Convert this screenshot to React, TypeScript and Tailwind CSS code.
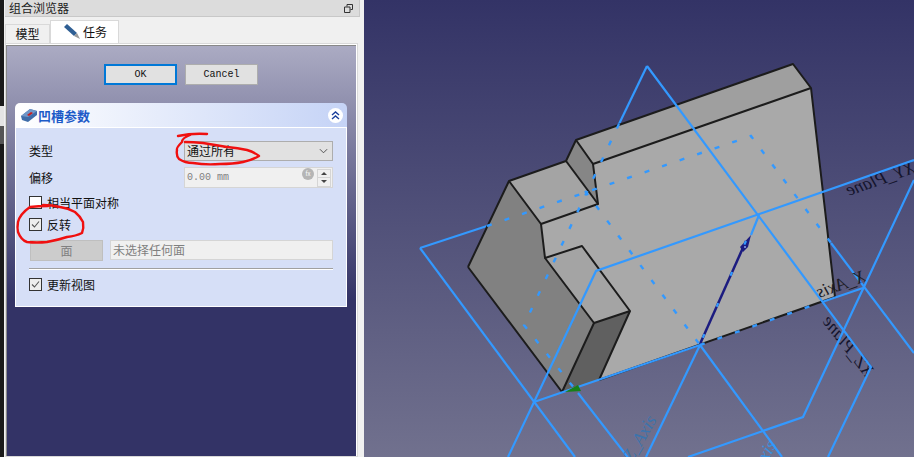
const cjk = "[font-family:'Noto_Sans_CJK_SC',sans-serif]"

// solid faces of the pocket preview, in screenshot coordinates
const faces = [
  { fill: "#a9a9a9", points: "541,224 598,204 593,164 811,88 835,297 599,380 630,311 582,246 545,258" },
  { fill: "#9f9f9f", points: "576,140 793,64 811,88 593,164" },
  { fill: "#868686", points: "576,140 593,164 598,204 566,161" },
  { fill: "#a4a4a4", points: "566,161 598,204 541,224 509,181" },
  { fill: "#818181", points: "509,181 541,224 545,258 594,323 562,392 468,267" },
  { fill: "#a4a4a4", points: "545,258 582,246 630,311 594,323" },
  { fill: "#606060", points: "594,323 630,311 599,380 562,392" },
]

const edges = [
  "468,267 509,181 566,161 576,140 793,64 811,88 835,297",
  "576,140 593,164 811,88",
  "593,164 598,204 541,224 509,181",
  "566,161 598,204",
  "541,224 545,258 582,246 630,311 599,380",
  "545,258 594,323 630,311",
  "594,323 562,392 468,267",
]

const behindLines = [
  "647,66 619,124",
  "420,248 487,226",
  "831,243 914,353",
  "578,393 640,473",
]

const frontLines = [
  "914,160 596,271 508,457",
  "647,66 871,367 828,457",
  "534,402 700,345",
  "822,302 863,288",
  "420,248 575,457",
  "700,345 646,457",
  "700,345 782,457",
  "914,180 803,417 688,457",
]

const dashedLines = [
  "487,226 751,136 831,243",
  "619,124 524,325 578,393",
  "585,191 700,345",
  "700,345 822,302",
]

function CadView() {
  return (
    <div className="flex-1 h-full bg-[linear-gradient(180deg,#333366,#71718e)]">
      <svg viewBox="364 0 550 457" className="w-full h-full block">
        <g fill="none" stroke="#3399ff" strokeWidth="2.2">
          {behindLines.map((p) => <polyline key={p} points={p} />)}
        </g>
        {faces.map((f) => <polygon key={f.points} points={f.points} fill={f.fill} />)}
        <polyline points="599,380 835,297" fill="none" stroke="#1c1c1c" strokeWidth="2" />
        <g fill="none" stroke="#1c1c1c" strokeWidth="2" strokeLinejoin="round">
          {edges.map((p) => <polyline key={p} points={p} />)}
        </g>
        <g fontFamily="'Liberation Serif',serif" fontStyle="italic" fontSize="18">
          <text transform="translate(912,160) rotate(-19.5) scale(-1,1) translate(0,13)" fill="#14142c">XY_Plane</text>
          <text transform="translate(866,378) rotate(52) scale(-1,1)" fill="#14142c">XZ_Plane</text>
          <text transform="translate(867,281) rotate(-19.5) scale(-1,1)" fill="#1c1c26">X_Axis</text>
          <text transform="translate(632,463) rotate(-60)" fill="#3b74ad">Z_Axis</text>
          <text transform="translate(752,488) rotate(-60)" fill="#3b8fdc">Y_Axis</text>
        </g>
        <polyline points="746,241 700,344" fill="none" stroke="#1c1c80" strokeWidth="2.5" />
        <polygon points="751,235 748,247 743,252 740,247" fill="#1c1c80" />
        <circle cx="745" cy="247" r="1" fill="#8fa8e8" />
        <g fill="none" stroke="#3399ff" strokeWidth="2.2">
          {frontLines.map((p) => <polyline key={p} points={p} />)}
          <polyline points="759,215 751,235" />
          <polyline points="746,241 700,344" strokeDasharray="4 30" />
        </g>
        <g fill="none" stroke="#3399ff" strokeWidth="2.4" strokeDasharray="5 13.5">
          {dashedLines.map((p) => <polyline key={p} points={p} />)}
        </g>
        <polygon points="565,392 578,385 581,391" fill="#178017" />
      </svg>
    </div>
  )
}

function CheckBox({ checked, label }: { checked?: boolean; label: string }) {
  return (
    <div className="flex items-center h-[13px] gap-[5px]">
      <div className={`w-[13px] h-[13px] border border-[#333333] ${checked ? "bg-[#ededed]" : "bg-white"}`}>
        {checked && (
          <svg viewBox="0 0 11 11" className="w-[11px] h-[11px] block">
            <path d="M2 5.5 L4.5 8 L9 2.5" fill="none" stroke="#555555" strokeWidth="1.1" />
          </svg>
        )}
      </div>
      <span className="text-[12px] leading-none text-[#111111]">{label}</span>
    </div>
  )
}

function GroupBox() {
  return (
    <div className="ml-2 mt-[18px] w-[332px]">
      <div className="h-6 rounded-t-[5px] bg-[linear-gradient(90deg,#ffffff,#c5d3f6)] flex items-center pl-[6px] pr-[4px]">
        <svg viewBox="0 0 16 14" className="w-4 h-[14px] shrink-0">
          <polygon points="0,8 9,1 16,3 16,7 7,14 1,12" fill="#3f6ca8" />
          <polygon points="0,8 9,1 16,3 7,9" fill="#6f96c8" />
          <polygon points="6,7 10,4 12,5 8,8" fill="#c81e1e" />
        </svg>
        <span className="ml-px text-[13px] font-bold text-[#1c5ac8] leading-none">凹槽参数</span>
        <div className="ml-auto w-[15px] h-[15px] rounded-full bg-white flex items-center justify-center">
          <svg viewBox="0 0 9 9" className="w-[9px] h-[9px]">
            <path d="M1 4 L4.5 1 L8 4 M1 8 L4.5 5 L8 8" fill="none" stroke="#1c3f9c" strokeWidth="1.4" />
          </svg>
        </div>
      </div>
      <div className="h-[180px] border border-white bg-[#d6dff7] pl-[13px] pr-[13px] pt-[13px] flex flex-col">
        <div className="flex items-center justify-between h-5">
          <span className="text-[12px] text-[#111111] leading-none">类型</span>
          <div className="w-[149px] h-5 border border-[#adadad] bg-[#e1e1e1] flex items-center justify-between pl-[2px] pr-[4px]">
            <span className="text-[12px] text-[#111111] leading-none">通过所有</span>
            <svg viewBox="0 0 10 6" className="w-[9px] h-[6px]">
              <path d="M1 1 L5 5 L9 1" fill="none" stroke="#444444" strokeWidth="1" />
            </svg>
          </div>
        </div>
        <div className="flex items-center justify-between h-[21px] mt-[6px]">
          <span className="text-[12px] text-[#111111] leading-none">偏移</span>
          <div className="w-[149px] h-[21px] border border-[#d5d5d5] bg-[#f0f0f0] flex items-center pl-[2px] pr-px">
            <span className="font-['Liberation_Mono',monospace] text-[10px] leading-none text-[#808080]">0.00 mm</span>
            <div className="ml-auto mr-[3px] mb-[7px] w-3 h-3 rounded-full bg-[#b5b5b5] text-white text-[6px] leading-[12px] text-center">fx</div>
            <div className="w-[14px] h-[18px] border border-[#d5d5d5] flex flex-col">
              <div className="h-[8px] flex items-center justify-center border-b border-[#d5d5d5]">
                <svg viewBox="0 0 6 3" className="w-[6px] h-[3px]"><polygon points="0,3 3,0 6,3" fill="#444444" /></svg>
              </div>
              <div className="flex-1 flex items-center justify-center">
                <svg viewBox="0 0 6 3" className="w-[6px] h-[3px]"><polygon points="0,0 3,3 6,0" fill="#444444" /></svg>
              </div>
            </div>
          </div>
        </div>
        <div className="mt-2">
          <CheckBox label="相当平面对称" />
        </div>
        <div className="mt-[9px]">
          <CheckBox checked label="反转" />
        </div>
        <div className="flex items-start mt-[9px] h-[21px] pl-px gap-[7px]">
          <div className="w-[73px] h-[21px] bg-[#cccccc] border border-[#bfbfbf] text-[12px] text-[#808080] flex items-center justify-center">面</div>
          <div className="flex-1 h-5 bg-[#f0f0f0] border border-[#d5d5d5] text-[12px] text-[#7f7f7f] flex items-center pl-[2px]">未选择任何面</div>
        </div>
        <div className="mt-[7px] h-[2px] border-t border-[#a0a0a0] bg-white" />
        <div className="mt-2">
          <CheckBox checked label="更新视图" />
        </div>
      </div>
    </div>
  )
}

function LeftPanel() {
  return (
    <div className={`w-[360px] h-full bg-[#f0f0f0] ${cjk}`}>
      <div className="ml-px w-[355px] h-[17px] bg-[#dcdcdc] border-r border-b border-[#c8c8c8] flex items-center justify-between pl-1 pr-[6px]">
        <span className="text-[12px] leading-none text-[#222222]">组合浏览器</span>
        <svg viewBox="0 0 9 9" className="w-[9px] h-[9px]">
          <path d="M3 2.5 V0.5 H8.5 V5.5 H6.5 M0.5 3 H6 V8.5 H0.5 Z" fill="none" stroke="#333333" strokeWidth="1" />
        </svg>
      </div>
      <div className="ml-px mt-[3px] h-[23px] flex items-end">
        <div className="w-[45px] h-[19px] bg-[#f0f0f0] border border-b-0 border-[#d9d9d9] text-[12px] leading-none text-[#111111] flex items-center justify-center">模型</div>
        <div className="w-[69px] h-[23px] bg-white border border-b-0 border-[#d9d9d9] text-[12px] leading-none text-[#111111] flex items-center pl-[13px] gap-[3px]">
          <svg viewBox="0 0 16 16" className="w-4 h-4">
            <polygon points="0,3 3,0 13,9 10,12" fill="#2f5f94" />
            <polygon points="10,12 13,9 16,15" fill="#9a9a9a" />
          </svg>
          任务
        </div>
      </div>
      <div className="ml-px w-[353px] h-[414px] border border-[#d9d9d9] bg-white pt-px">
        <div className="w-[350px] h-full border-t border-l border-[#888888] bg-[linear-gradient(180deg,#ababc3,#333366_62%)]">
          <div className="flex pl-[97px] pt-[18px] gap-2">
            <button className="w-[73px] h-[21px] bg-[#e1e1e1] border-2 border-[#0078d7] font-['Liberation_Mono',monospace] text-[10px] text-[#111111]">OK</button>
            <button className="w-[73px] h-[21px] bg-[#e1e1e1] border border-[#adadad] font-['Liberation_Mono',monospace] text-[10px] text-[#111111]">Cancel</button>
          </div>
          <GroupBox />
        </div>
      </div>
    </div>
  )
}

export default function App() {
  return (
    <div className="relative w-[914px] h-[457px] flex overflow-hidden">
      <div className="w-1 h-full bg-[#1a1a1a] flex flex-col pt-[106px]">
        <div className="h-5 bg-[#e4e4e4]" />
        <div className="h-[18px] bg-[#555555]" />
      </div>
      <LeftPanel />
      <CadView />
      <svg viewBox="0 0 914 457" className="absolute inset-0 w-full h-full pointer-events-none">
        <g fill="none" stroke="#f01010" strokeWidth="2.4" strokeLinecap="round" strokeLinejoin="round">
          <path d="M178 136 Q192 133 207 134" />
          <path d="M190 135 Q182 138 182 142 Q176 148 177 150 Q176 156 179 159 Q185 163 193 163 Q205 165 220 164 Q233 164 243 162 Q252 160 259 156 Q254 152 247 150 Q238 148 227 147 Q215 145 203 143 Q193 142 185 142" />
          <path d="M48 206 Q38 206 30 207 Q20 214 18 222 Q17 228 18 232 Q21 240 27 242 Q37 243 47 242 Q58 240 67 237 Q76 236 82 233 Q84 228 83 222 Q80 216 75 212 Q68 208 60 207 Q52 205 43 205" />
        </g>
      </svg>
    </div>
  )
}
